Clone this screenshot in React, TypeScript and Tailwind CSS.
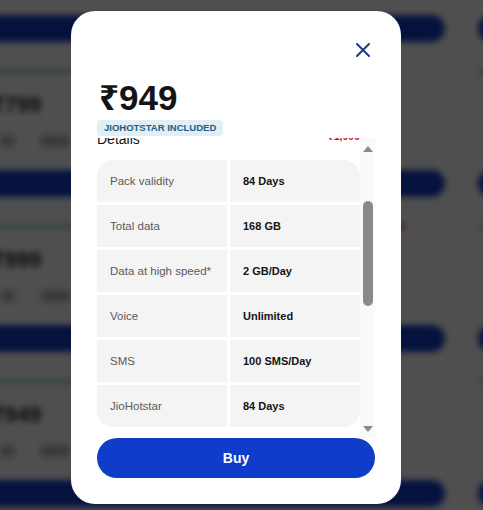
import { useLayoutEffect, useRef } from "react";

type SpecRow = {
  label: string;
  value: string;
};

type BackdropPlan = {
  id: string;
  price: string;
  offer?: boolean;
};

const specs: SpecRow[] = [
  { label: "Pack validity", value: "84 Days" },
  { label: "Total data", value: "168 GB" },
  { label: "Data at high speed*", value: "2 GB/Day" },
  { label: "Voice", value: "Unlimited" },
  { label: "SMS", value: "100 SMS/Day" },
  { label: "JioHotstar", value: "84 Days" },
];

const backdropPlans: BackdropPlan[] = [
  { id: "p1", price: "₹799" },
  { id: "p2", price: "₹999", offer: true },
  { id: "p3", price: "₹949" },
  { id: "p4", price: "₹1199" },
];

const font = "font-['Liberation_Sans','Noto_Sans',Arial,sans-serif]";

function PlanTile({ plan }: { plan: BackdropPlan }) {
  return (
    <div className="flex h-[155px] flex-col">
      <div className="h-[27px] rounded-full bg-[#1238c2]" />
      <div className="mt-[27px] flex items-center justify-between pr-[40px]">
        <div className="h-[5px] w-[220px] rounded bg-[#a9cfd8]" />
        {plan.offer ? <div className="h-[5px] w-[36px] rounded bg-[#d0374f]" /> : null}
      </div>
      <div className="mt-[14px] flex items-center justify-between pl-[32px] pr-[60px]">
        <p className="text-[22px] font-bold text-[#222]">{plan.price}</p>
        <div className="h-[7px] w-[7px] rounded-full bg-[#aab8e0]" />
      </div>
      <div className="mt-[14px] flex items-center gap-[25px] pl-[40px]">
        <div className="h-[12px] w-[15px] rounded bg-[#b5b5b5]" />
        <div className="h-[12px] w-[30px] rounded bg-[#b5b5b5]" />
        <div className="ml-auto mr-[50px] h-[3px] w-[70px] rounded bg-[#c4c4c4]" />
      </div>
    </div>
  );
}

function CloseIcon() {
  return (
    <svg width="14" height="14" viewBox="0 0 14 14" fill="none">
      <path d="M1 1L13 13M13 1L1 13" stroke="#1d3b8e" strokeWidth="2" strokeLinecap="round" />
    </svg>
  );
}

function Arrow({ down }: { down?: boolean }) {
  return (
    <svg width="10" height="6" viewBox="0 0 10 6" className={down ? "rotate-180" : ""}>
      <path d="M5 0L10 6H0Z" fill="#8a8a8a" />
    </svg>
  );
}

function ScrollBar() {
  return (
    <div className="flex w-[15px] flex-col items-center bg-[#fafafa]">
      <div className="flex h-[15px] items-end pb-[1px]">
        <Arrow />
      </div>
      <div className="flex-1">
        <div className="mt-[48px] h-[105px] w-[10px] rounded-full bg-[#8a8a8a]" />
      </div>
      <div className="flex h-[15px] items-start pt-[3px]">
        <Arrow down />
      </div>
    </div>
  );
}

function SpecsTable() {
  return (
    <div className="grid grid-cols-2 gap-[3px] overflow-hidden rounded-2xl">
      {specs.map((row) => (
        <div key={row.label} className="contents">
          <div className="flex h-[42px] items-center bg-[#f4f4f4] pl-[13px] pt-[2px] text-[11.5px] text-[#5a5a5a]">
            {row.label}
          </div>
          <div className="flex h-[42px] items-center bg-[#f4f4f4] pl-[13px] text-[11px] font-bold text-[#141414]">
            {row.value}
          </div>
        </div>
      ))}
    </div>
  );
}

export default function App() {
  const scrollRef = useRef<HTMLDivElement>(null);
  const tableRef = useRef<HTMLDivElement>(null);

  useLayoutEffect(() => {
    const box = scrollRef.current;
    const table = tableRef.current;
    if (box && table) {
      box.scrollTop = table.offsetTop - 22;
    }
  }, []);

  return (
    <div className={`relative h-[510px] w-[483px] overflow-hidden bg-[#f6f6f6] ${font}`}>
      {/* plans list behind the sheet */}
      <div className="flex gap-[33px] pt-[15px] blur-[3px]">
        <div className="-ml-[40px] flex w-[485px] shrink-0 flex-col">
          {backdropPlans.map((plan) => (
            <PlanTile key={plan.id} plan={plan} />
          ))}
        </div>
        <div className="flex w-[300px] shrink-0 flex-col">
          {backdropPlans.map((plan) => (
            <PlanTile key={plan.id} plan={plan} />
          ))}
        </div>
      </div>

      <div className="absolute inset-0 bg-black/[0.68]" />

      {/* plan details sheet */}
      <div className="absolute left-[71px] top-[11px] flex w-[330px] flex-col rounded-[24px] bg-white px-[26px] pb-[26px] pt-[27px]">
        <div className="flex justify-end">
          <button type="button" className="flex h-[24px] w-[24px] items-center justify-center">
            <CloseIcon />
          </button>
        </div>

        <p className="mt-[18px] pl-[2px] text-[35px] font-bold leading-none text-[#141414]">₹949</p>

        <div className="mt-[5px] self-start rounded-[4px] bg-[#e1eef5] px-[7px] text-[9.5px] font-bold leading-[16px] text-[#1a5f82]">
          JIOHOTSTAR INCLUDED
        </div>

        <div className="mt-[2px] flex h-[300px]">
          <div ref={scrollRef} className="relative w-[263px] overflow-hidden">
            <div className="flex items-start justify-between">
              <p className="text-[14px] leading-[20px] text-[#141414]">Details</p>
              <p className="pt-[1px] text-[10.5px] font-bold leading-[12px] text-[#c8102e]">₹1,099</p>
            </div>

            <div ref={tableRef} className="mt-[11px] pb-[40px]">
              <SpecsTable />
            </div>
          </div>
          <ScrollBar />
        </div>

        <button
          type="button"
          className="h-[40px] rounded-full bg-[#0f3cc9] text-[14px] font-bold text-white"
        >
          Buy
        </button>
      </div>
    </div>
  );
}
